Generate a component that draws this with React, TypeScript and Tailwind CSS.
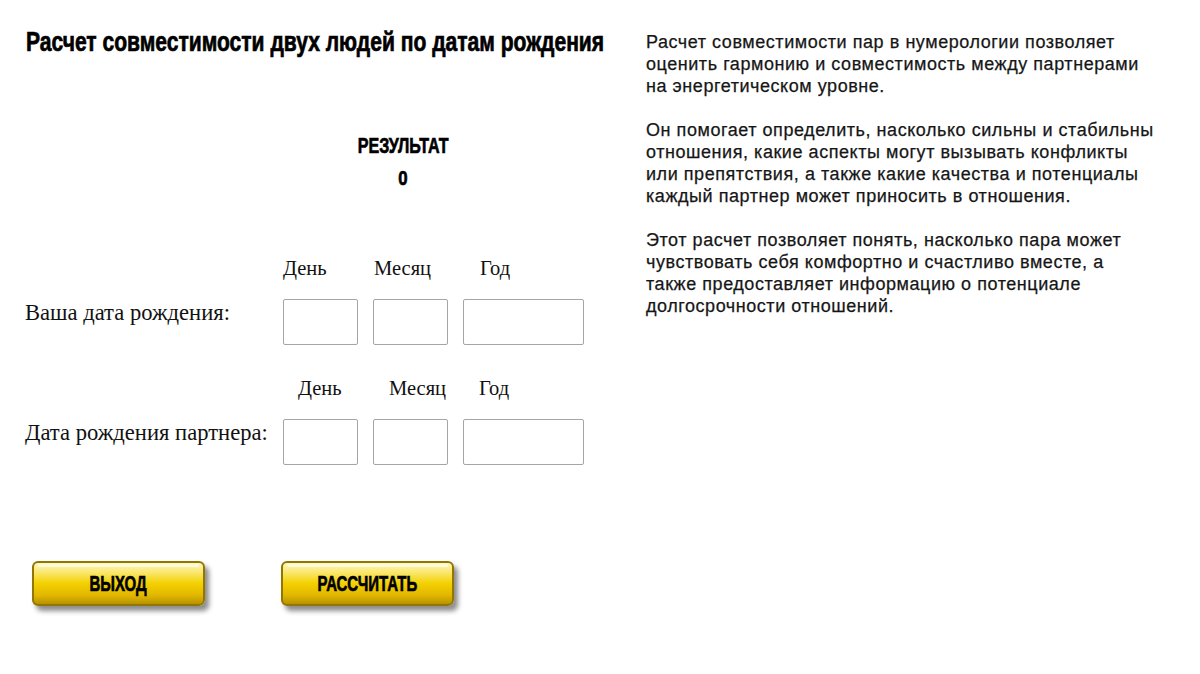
import { useState } from 'react';

const serif = { fontFamily: '"Liberation Serif", "DejaVu Serif", serif' };
const impact = 'font-["Liberation_Sans",Arial,sans-serif] font-bold inline-block [-webkit-text-stroke:0.7px_black]';

function GoldButton({ label, onClick }: { label: string; onClick?: () => void }) {
  return (
    <button
      onClick={onClick}
      className="relative w-[173px] h-[45px] rounded-[6px] border-2 border-[#927600] bg-[linear-gradient(to_bottom,#fff7c0_0%,#fae870_22%,#f3d000_50%,#e2b800_78%,#b89200_100%)] shadow-[4px_5px_5px_rgba(0,0,0,0.45)] overflow-hidden flex items-center justify-center"
    >
      {/* glossy top edge */}
      <span className="absolute inset-x-[4px] top-[1px] h-[3px] rounded-full bg-[#fffbe6] opacity-80" />
      <span className={`relative ${impact} text-[22px] leading-[24px] text-black scale-x-[0.68]`}>{label}</span>
    </button>
  );
}

function DateRow({ label, heads }: { label: string; heads: string[] }) {
  return (
    <div>
      <div className="flex h-[30px] items-start text-[20.5px] leading-[30px] text-[#111]" style={serif}>
        <span className={heads[0]}>День</span>
        <span className={heads[1]}>Месяц</span>
        <span>Год</span>
      </div>
      <div className="flex items-start mt-[16px]">
        <span className="w-[283px] pl-[25px] pt-[1px] text-[22.6px] leading-[26px] text-[#111] whitespace-nowrap" style={serif}>
          {label}
        </span>
        <div className="flex gap-[15px]">
          <input className="w-[75px] h-[46px] border border-[#a5a5a5] rounded-[2px] outline-none" />
          <input className="w-[75px] h-[46px] border border-[#a5a5a5] rounded-[2px] outline-none" />
          <input className="w-[121px] h-[46px] border border-[#a5a5a5] rounded-[2px] outline-none" />
        </div>
      </div>
    </div>
  );
}

export default function App() {
  const [result] = useState(0);

  return (
    <div className="w-[1200px] h-[674px] bg-white flex overflow-hidden">
      {/* left column */}
      <div className="w-[620px] shrink-0 flex flex-col">
        <div className="pl-[26px] pt-[28px] h-[56px]">
          <h1 className={`${impact} text-[27px] leading-[28px] text-black scale-x-[0.78] origin-left whitespace-nowrap`}>
            Расчет совместимости двух людей по датам рождения
          </h1>
        </div>

        <div className="mt-[79px] pl-[186px] text-center">
          <div className="h-[22px]">
            <span className={`${impact} text-[22px] leading-[22px] text-black scale-x-[0.73]`}>РЕЗУЛЬТАТ</span>
          </div>
          <div className="mt-[10px] h-[22px]">
            <span className={`${impact} text-[21px] leading-[22px] text-black scale-x-[0.8] [-webkit-text-stroke:0.3px_black]`}>
              {result}
            </span>
          </div>
        </div>

        <div className="mt-[64px]">
          <DateRow label="Ваша дата рождения:" heads={['ml-[283px] w-[91px]', 'w-[106px]']} />
        </div>
        <div className="mt-[28px]">
          <DateRow label="Дата рождения партнера:" heads={['ml-[298px] w-[91px]', 'w-[90px]']} />
        </div>

        <div className="mt-[96px] flex pl-[32px] gap-[76px]">
          <GoldButton label="ВЫХОД" />
          <GoldButton label="РАССЧИТАТЬ" />
        </div>
      </div>

      {/* right column */}
      <div className="pl-[26px] pt-[31px] font-['Liberation_Sans',Arial,sans-serif] text-[18px] leading-[22px] tracking-[0.55px] text-[#161616] [-webkit-text-stroke:0.25px_#161616] whitespace-nowrap space-y-[22px]">
        <p>
          Расчет совместимости пар в нумерологии позволяет
          <br />
          оценить гармонию и совместимость между партнерами
          <br />
          на энергетическом уровне.
        </p>
        <p>
          Он помогает определить, насколько сильны и стабильны
          <br />
          отношения, какие аспекты могут вызывать конфликты
          <br />
          или препятствия, а также какие качества и потенциалы
          <br />
          каждый партнер может приносить в отношения.
        </p>
        <p>
          Этот расчет позволяет понять, насколько пара может
          <br />
          чувствовать себя комфортно и счастливо вместе, а
          <br />
          также предоставляет информацию о потенциале
          <br />
          долгосрочности отношений.
        </p>
      </div>
    </div>
  );
}
